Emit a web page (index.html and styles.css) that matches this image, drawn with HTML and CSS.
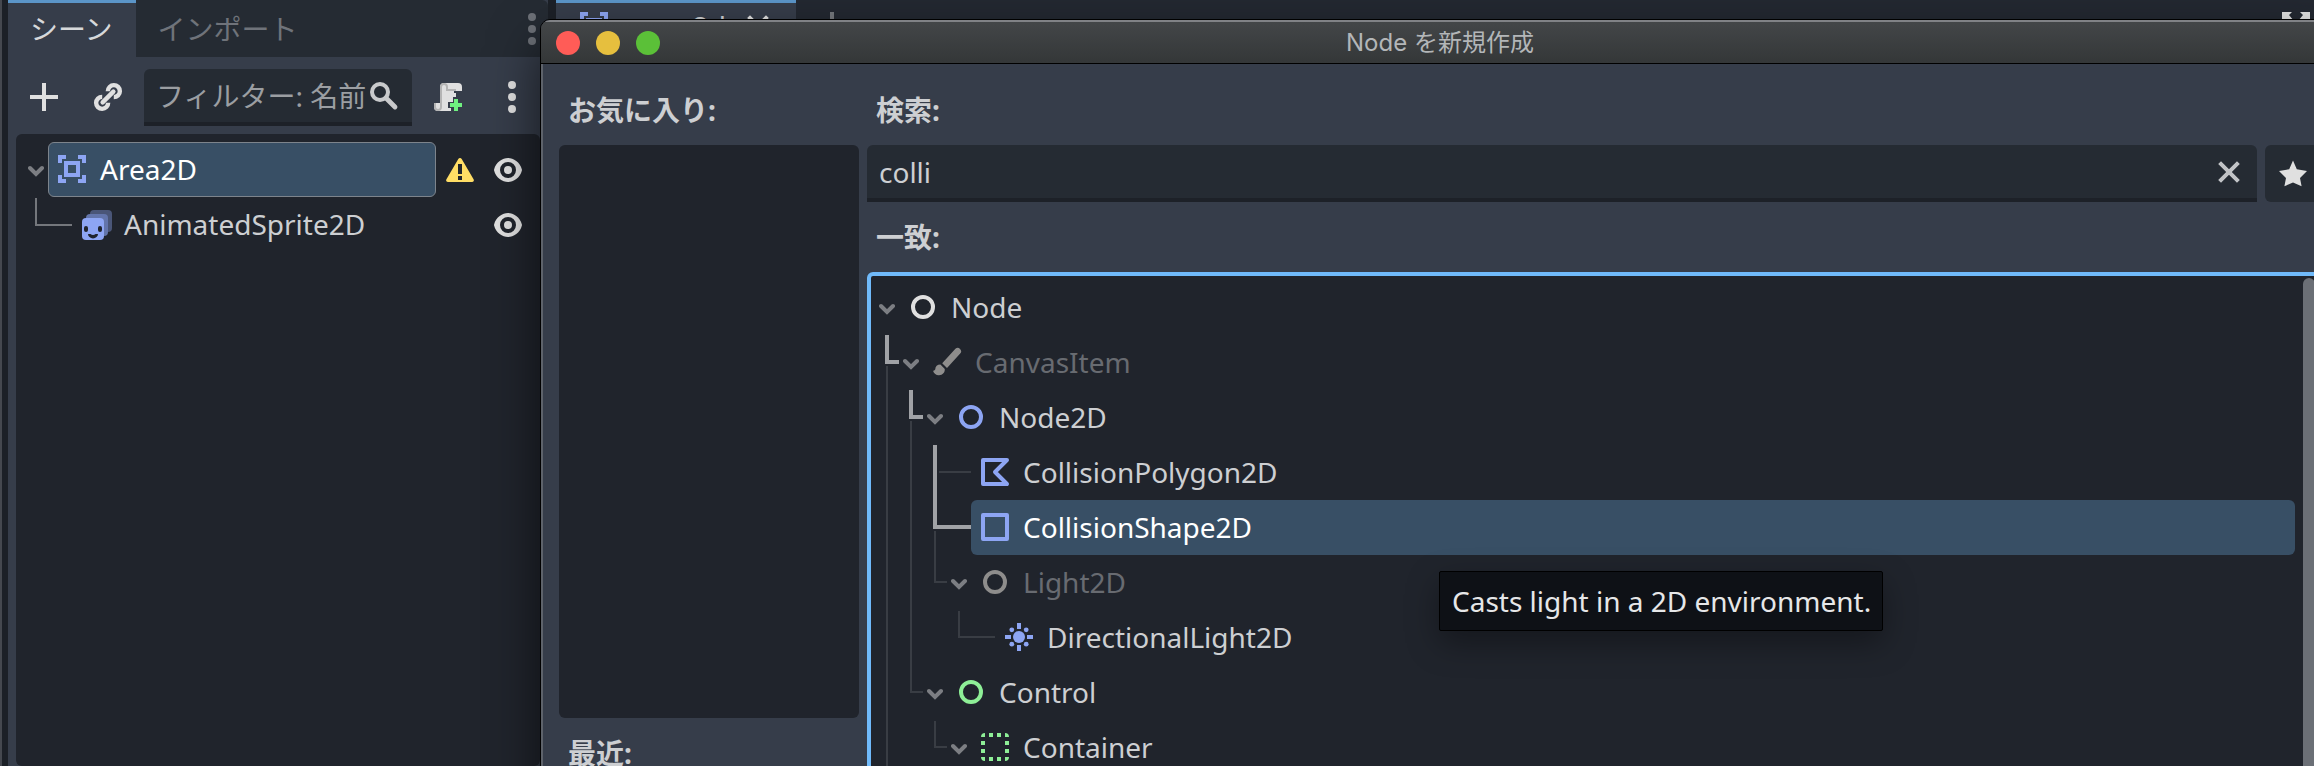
FILE: index.html
```html
<!DOCTYPE html>
<html lang="ja">
<head>
<meta charset="utf-8">
<title>Node を新規作成</title>
<link rel="stylesheet" href="styles.css">
</head>
<body>
<svg class="defs" aria-hidden="true">
  <symbol id="plus" viewBox="0 0 16 16"><path d="M7 1v6H1v2h6v6h2V9h6V7H9V1z"/></symbol>
  <symbol id="dots" viewBox="0 0 16 16"><circle cx="8" cy="2" r="2"/><circle cx="8" cy="8" r="2"/><circle cx="8" cy="14" r="2"/></symbol>
  <symbol id="chevron" viewBox="0 0 8 8"><path d="M1 3l3 3 3-3" fill="none" stroke="currentColor" stroke-width="2" stroke-linecap="round"/></symbol>
  <symbol id="cross" viewBox="0 0 16 16"><path d="M3.3 3.3l9.4 9.4M12.7 3.3l-9.4 9.4" fill="none" stroke="currentColor" stroke-width="2"/></symbol>
  <symbol id="area" viewBox="0 0 16 16"><path fill-rule="evenodd" d="M1 1v4h2V3h2V1zm10 0v2h2v2h2V1zM4 4v8h8V4zm2 2h4v4H6zm-5 5v4h4v-2H3v-2zm12 0v2h-2v2h4v-4z"/></symbol>
  <symbol id="eye" viewBox="0 0 16 16"><path d="M8 2C5.255 2 2.031 3.96 1.037 7.713v.57C2.03 12.04 5.23 14 8 14s5.97-1.96 6.963-5.715v-.57C13.97 3.958 10.745 2 8 2zm0 2a4 4 0 0 1 4 4 4 4 0 0 1-4 4 4 4 0 0 1-4-4 4 4 0 0 1 4-4zm0 2a2 2 0 0 0-2 2 2 2 0 0 0 2 2 2 2 0 0 0 2-2 2 2 0 0 0-2-2z" fill-rule="evenodd"/></symbol>
  <symbol id="ring" viewBox="0 0 16 16"><circle cx="8" cy="8" r="5" fill="none" stroke="currentColor" stroke-width="2"/></symbol>
</svg>

<div class="editor">
  <aside class="dock">
    <div class="dock-tabs" role="tablist">
      <button class="dock-tab active" role="tab" aria-selected="true">シーン</button>
      <button class="dock-tab" role="tab" aria-selected="false">インポート</button>
      <button class="dock-menu" aria-label="ドックメニュー"><svg class="icon"><use href="#dots"/></svg></button>
    </div>
    <div class="toolbar">
      <button class="tool" aria-label="ノードを追加"><svg class="icon"><use href="#plus"/></svg></button>
      <button class="tool" aria-label="シーンをインスタンス化">
        <svg class="icon" viewBox="0 0 16 16">
          <g fill="none" stroke="currentColor" stroke-width="2.200" transform="rotate(-45 8 8)">
            <path d="M4.200 8h7.600" stroke-linecap="round"/>
            <path d="M6 5.900A3 3 0 1 0 6 10.100M10 5.900A3 3 0 1 1 10 10.100"/>
          </g>
        </svg>
      </button>
      <label class="filter">
        <input type="text" placeholder="フィルター: 名前" aria-label="フィルター">
        <svg class="icon" viewBox="0 0 16 16"><circle cx="6" cy="6" r="4" fill="none" stroke="currentColor" stroke-width="2"/><path d="M9 9l4.500 4.500" stroke="currentColor" stroke-width="2.400" stroke-linecap="round"/></svg>
      </label>
      <button class="tool" aria-label="スクリプトをアタッチ">
        <svg class="icon" viewBox="0 0 16 16">
          <path d="M6 1a2 2 0 0 0-2 2v8H1v2a2 2 0 0 0 2 2h6.500V13.500H8v-3h2.500V8H12V6h-1V5h4V3a2 2 0 0 0-2-2z"/>
          <path d="M1.500 11v2a1.500 1.500 0 0 0 3 0V3A1.500 1.500 0 0 1 6 1.500M6 1.500A1.500 1.500 0 0 1 7.500 3v1.500H12" fill="none" stroke="#b4b4b4"/>
          <path class="green-fill" d="M11 9h2v2h2v2h-2v2h-2v-2H9v-2h2z"/>
        </svg>
      </button>
      <button class="tool" aria-label="その他"><svg class="icon"><use href="#dots"/></svg></button>
    </div>
    <div class="scene-tree" role="tree">
      <div class="scene-row" role="treeitem" aria-selected="true">
        <svg class="chevron"><use href="#chevron"/></svg>
        <span class="scene-item selected"><svg class="icon blue"><use href="#area"/></svg>Area2D</span>
        <svg class="icon yellow" viewBox="0 0 16 16"><path fill-rule="evenodd" d="M8 2a1 1 0 0 0-.85.5l-6 10.200A.9.9 0 0 0 2 14h12a.9.9 0 0 0 .85-1.300l-6-10.200A1 1 0 0 0 8 2zM7 5h2v5H7zM7 11h2v2H7z"/></svg>
        <button class="eye" aria-label="表示切替"><svg class="icon"><use href="#eye"/></svg></button>
      </div>
      <div class="scene-row child" role="treeitem">
        <span class="elbow"></span>
        <span class="scene-item">
          <svg class="icon" viewBox="0 0 16 16">
            <rect x="5" y="1" width="11" height="11" rx="2" fill="#4a5678"/>
            <rect x="3" y="3" width="11" height="11" rx="2" fill="#6375ab"/>
            <rect x="1" y="5" width="11" height="11" rx="2" fill="#8da5f3"/>
            <g fill="#20242c"><rect x="2" y="9" width="2" height="3" rx="1"/><rect x="9" y="9" width="2" height="3" rx="1"/><path d="M4 13h1.200q1.300 1 2.600 0H9a2.500 2.200 0 0 1-5 0z"/></g>
          </svg>AnimatedSprite2D</span>
        <button class="eye" aria-label="表示切替"><svg class="icon"><use href="#eye"/></svg></button>
      </div>
    </div>
  </aside>

  <main class="workspace">
    <div class="scene-tabs">
      <div class="scene-tab"><svg class="icon blue"><use href="#area"/></svg><span>area_2d</span><svg class="icon"><use href="#cross"/></svg></div>
      <button class="new-tab" aria-label="新規シーン"><svg class="icon"><use href="#plus"/></svg></button>
      <button class="expand" aria-label="集中モード"><svg class="icon" viewBox="0 0 16 16"><path d="M1 1h5L4.500 2.500l2.500 3L5.500 7l-3-2.500L1 6zM15 1h-5l1.500 1.500-2.500 3L10.500 7l3-2.500L15 6z"/></svg></button>
    </div>
  </main>
</div>

<section class="dialog" role="dialog" aria-labelledby="dialog-title">
  <header class="titlebar">
    <div class="lights">
      <button class="light red" aria-label="閉じる"></button>
      <button class="light amber" aria-label="最小化"></button>
      <button class="light lime" aria-label="最大化"></button>
    </div>
    <h1 id="dialog-title">Node を新規作成</h1>
  </header>
  <div class="dialog-body">
    <div class="side">
      <h2 class="label">お気に入り:</h2>
      <div class="list favorites"></div>
      <h2 class="label">最近:</h2>
      <div class="list recent"></div>
    </div>
    <div class="finder">
      <label class="label" for="search">検索:</label>
      <div class="search-row">
        <div class="search-box">
          <input id="search" type="text" value="colli">
          <button class="clear" aria-label="クリア"><svg class="icon"><use href="#cross"/></svg></button>
        </div>
        <button class="star" aria-label="お気に入り"><svg class="icon" viewBox="0 0 16 16"><path d="M8 1.800l1.900 4.300 5.100.9-3.500 3.500.8 4.100L8 12.800l-4.300 1.800.8-4.100L1 7l5.100-.9z"/></svg></button>
      </div>
      <h2 class="label">一致:</h2>
      <div class="matches">
        <svg class="guides" aria-hidden="true">
          <g class="thin">
            <path d="M16 90V600"/>
            <path d="M40 145V416H52"/>
            <path d="M68 196H100"/>
            <path d="M64 255V306H76"/>
            <path d="M88 335V361H124"/>
            <path d="M64 445V471H76"/>
          </g>
          <g class="thick">
            <path d="M16 59V86H28"/>
            <path d="M40 114V141H52"/>
            <path d="M64 169V251H100"/>
          </g>
        </svg>
        <div class="rows" role="tree">
          <div class="row" role="treeitem"><svg class="chevron"><use href="#chevron"/></svg><span class="item"><svg class="icon"><use href="#ring"/></svg>Node</span></div>
          <div class="row d1 muted" role="treeitem"><svg class="chevron"><use href="#chevron"/></svg><span class="item"><svg class="icon" viewBox="0 0 16 16"><path d="M12.200 1.400L5.600 8.600 8 11l6.600-7.200A1.700 1.700 0 0 0 12.200 1.400z"/><path d="M4.700 9.300c-1.600 0-2.500 1-2.600 2.400-.3.500-.7.600-1.100.7.500 1.500 1.700 2.300 3 2.200 1.900-.1 3-1.300 2.900-3.100z"/></svg>CanvasItem</span></div>
          <div class="row d2" role="treeitem"><svg class="chevron"><use href="#chevron"/></svg><span class="item"><svg class="icon blue"><use href="#ring"/></svg>Node2D</span></div>
          <div class="row d3" role="treeitem"><span class="item"><svg class="icon blue" viewBox="0 0 16 16"><path d="M2 2h12L8 8l6 6H2z" fill="none" stroke="currentColor" stroke-width="2" stroke-linejoin="round"/></svg>CollisionPolygon2D</span></div>
          <div class="row d3" role="treeitem" aria-selected="true"><span class="item selected"><svg class="icon blue" viewBox="0 0 16 16"><rect x="2" y="2" width="12" height="12" fill="none" stroke="currentColor" stroke-width="2" stroke-linejoin="round"/></svg>CollisionShape2D</span></div>
          <div class="row d3 muted" role="treeitem"><svg class="chevron"><use href="#chevron"/></svg><span class="item"><svg class="icon"><use href="#ring"/></svg>Light2D</span></div>
          <div class="row d4" role="treeitem"><span class="item"><svg class="icon blue" viewBox="0 0 16 16"><path d="M7 1h2v3H7zM7 12h2v3H7zM1 7h3v2H1zM12 7h3v2h-3z"/><circle cx="8" cy="8" r="3"/><circle cx="4.400" cy="4.400" r="1.200"/><circle cx="11.600" cy="4.400" r="1.200"/><circle cx="4.400" cy="11.600" r="1.200"/><circle cx="11.600" cy="11.600" r="1.200"/></svg>DirectionalLight2D</span></div>
          <div class="row d2" role="treeitem"><svg class="chevron"><use href="#chevron"/></svg><span class="item"><svg class="icon green"><use href="#ring"/></svg>Control</span></div>
          <div class="row d3" role="treeitem"><svg class="chevron"><use href="#chevron"/></svg><span class="item"><svg class="icon green" viewBox="0 0 16 16"><path d="M3 1v2H1a2 2 0 0 1 2-2zM5 1h2v2H5zM9 1h2v2H9zM13 1a2 2 0 0 1 2 2h-2zM1 5h2v2H1zM13 5h2v2h-2zM1 9h2v2H1zM13 9h2v2h-2zM1 13h2v2a2 2 0 0 1-2-2zM5 13h2v2H5zM9 13h2v2H9zM13 13h2a2 2 0 0 1-2 2z"/></svg>Container</span></div>
        </div>
        <div class="scrollbar"></div>
      </div>
    </div>
  </div>
</section>
<div class="tooltip" role="tooltip">Casts light in a 2D environment.</div>
</body>
</html>
```
FILE: styles.css
```css
* { box-sizing: border-box; margin: 0; }

html, body { height: 100%; overflow: hidden; }

body {
  position: relative;
  background: #1c2027;
  color: #cdcfd2;
  font: 28px/40px "Noto Sans", "Noto Sans CJK JP", sans-serif;
}

button, input {
  border: 0;
  padding: 0;
  background: none;
  color: inherit;
  font: inherit;
  outline: 0;
}

svg { display: block; flex: none; }
.defs { position: absolute; width: 0; height: 0; }
.icon { width: 32px; height: 32px; fill: currentColor; color: #e0e0e0; }
.chevron { width: 16px; height: 16px; color: #7c7e83; }
.blue { color: #8da5f3; }
.green { color: #8eef97; }
.green-fill { fill: #6ff080; }
.yellow { color: #ffdd65; }

/* Editor behind the dialog */
.editor { display: flex; height: 100%; border-left: 2px solid #45484f; padding-left: 6px; }

.dock {
  flex: none;
  display: flex;
  flex-direction: column;
  width: 540px;
  background: #363d4a;
}

.dock-tabs { display: flex; height: 57px; background: #252b33; border-top-right-radius: 6px; }

.dock-tab {
  padding: 0 23px 2px 22px;
  border-top: 3px solid transparent;
  color: #6f737a;
}

.dock-tab.active { background: #363d4a; border-color: #5b95c8; color: #d6d8da; }
.dock-menu { margin-left: auto; }
.dock-menu .icon { color: #6d7178; }

.toolbar { display: flex; gap: 8px; padding: 12px 8px 8px; }

.tool { display: grid; place-items: center; width: 56px; height: 57px; padding-bottom: 1px; }

.filter {
  flex: 1;
  display: flex;
  align-items: center;
  min-width: 0;
  height: 57px;
  padding: 0 12px;
  background: #252b33;
  border-bottom: 4px solid #1d2128;
  border-radius: 6px 6px 0 0;
}

.filter input { flex: 1; min-width: 0; }
.filter input::placeholder { color: #9b9ea2; opacity: 1; }
.filter .icon { color: #c9cacc; }

.scene-tree {
  flex: 1;
  margin: 0 8px;
  padding: 8px 16px 8px 12px;
  background: #20242c;
  border-radius: 6px;
}

.scene-row { display: flex; align-items: center; height: 55px; }
.scene-row .chevron { margin-right: 4px; }
.scene-item { flex: 1; display: flex; align-items: center; gap: 12px; height: 55px; padding: 0 0 1px 7px; border: 1px solid transparent; }
.scene-item.selected { margin-right: 8px; background: #384f65; border-color: #7d848c; border-radius: 6px; color: #fff; }
.eye { margin-left: 16px; }
.elbow { align-self: flex-start; width: 37px; height: 28px; margin: 1px 0 0 7px; border: solid #74777c; border-width: 0 0 2px 2px; }

.workspace { flex: 1; margin-left: 8px; }
.scene-tabs { display: flex; height: 57px; background: #232831; }
.scene-tab {
  display: flex;
  align-items: center;
  width: 240px;
  padding: 0 22px 8px;
  gap: 12px;
  background: #363d4a;
  border-top: 3px solid #5b95c8;
}
.scene-tab span { flex: 1; }
.new-tab { margin-left: 20px; padding-bottom: 5px; }
.new-tab .icon { color: #74777c; }
.expand { margin: 0 2px 5px auto; }

/* Dialog window, running past the right and bottom edges */
.dialog {
  position: absolute;
  top: 19px;
  left: 540px;
  right: -26px;
  bottom: -200px;
  display: flex;
  flex-direction: column;
  overflow: hidden;
  border: 1px solid #000;
  border-radius: 10px;
  background: #363d4a;
  box-shadow: 0 24px 50px rgba(0, 0, 0, .6);
}

.titlebar {
  position: relative;
  flex: none;
  display: grid;
  place-items: center;
  height: 44px;
  background: linear-gradient(#434648, #343738);
  border-top: 2px solid #808286;
  border-bottom: 1px solid #000;
}

.titlebar h1 { color: #b3b6b8; font: 400 24px/40px Inter, "Noto Sans CJK JP", sans-serif; }
.lights { position: absolute; left: 15px; display: flex; gap: 16px; }
.light { width: 24px; height: 24px; border-radius: 50%; }
.red { background: #ff5c57; }
.amber { background: #e6bf3e; }
.lime { background: #5bc038; }

.dialog-body {
  flex: 1;
  display: flex;
  gap: 8px;
  min-height: 0;
  padding: 11px 18px 18px 16px;
  border-left: 2px solid #5e636b;
}

.side { flex: none; display: flex; flex-direction: column; width: 300px; }
.label { display: block; padding: 0 9px; font-size: 28px; line-height: 70px; font-weight: 700; }
.list { background: #20242c; border-radius: 6px; }
.favorites { flex: 1; }
.recent { height: 159px; }

.finder { flex: 1; display: flex; flex-direction: column; min-width: 0; }
.search-row { display: flex; gap: 8px; }

.search-box {
  flex: 1;
  display: flex;
  align-items: center;
  height: 57px;
  padding: 0 12px;
  background: #252b33;
  border-bottom: 4px solid #1d2128;
  border-radius: 6px 6px 0 0;
}

.search-box input { flex: 1; }
.clear .icon { color: #c1c3c6; }
.star { display: grid; place-items: center; width: 56px; padding-bottom: 1px; background: #252b33; border-radius: 6px; }

.matches {
  position: relative;
  flex: 1;
  display: flex;
  min-height: 0;
  overflow: hidden;
  background: #20242c;
  border: 4px solid #70bafa;
  border-radius: 6px;
}

.guides { position: absolute; top: 0; left: 0; width: 200px; height: 600px; fill: none; }
.thin { stroke: #393d44; stroke-width: 2; }
.thick { stroke: #a0a2a6; stroke-width: 4; }

.rows { flex: 1; padding: 4px 8px 0; }
.row { display: flex; align-items: center; height: 55px; }
.row .chevron { margin-right: 4px; }
.row.d1 { padding-left: 24px; }
.row.d2 { padding-left: 48px; }
.row.d3 { padding-left: 72px; }
.row.d4 { padding-left: 96px; }
.item { flex: 1; display: flex; align-items: center; gap: 12px; height: 55px; padding: 0 0 1px 8px; border-radius: 6px; }
.row > .item:first-child { margin-left: 20px; }
.item.selected { background: #384f65; color: #fff; }
.muted .item { color: #686b71; }
.muted .icon { color: #8e8d8c; }
.scrollbar { width: 12px; margin: 2px 2px 0 0; background: #6b6f76; border-radius: 6px; }

.tooltip {
  position: absolute;
  top: 571px;
  left: 1439px;
  padding: 9px 11px 9px 12px;
  background: #0e1116;
  border: 1px solid #000;
  border-radius: 2px;
  color: #e6e7e8;
  box-shadow: 0 12px 32px rgba(0, 0, 0, .35);
}
```
